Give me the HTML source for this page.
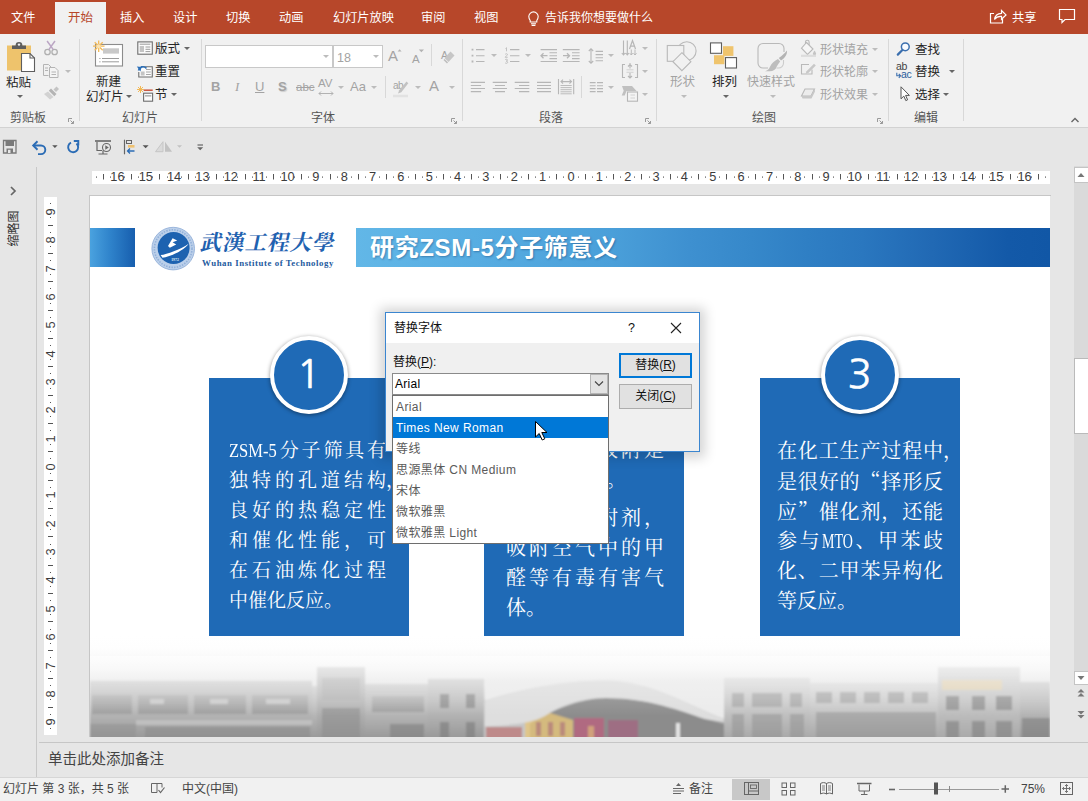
<!DOCTYPE html>
<html lang="zh-CN">
<head>
<meta charset="utf-8">
<title>PowerPoint</title>
<style>
*{box-sizing:border-box;margin:0;padding:0}
html,body{width:1088px;height:801px;overflow:hidden}
body{position:relative;background:#e6e6e6;font-family:"Liberation Sans","Noto Sans CJK SC",sans-serif;font-size:12px;color:#262626}
.abs{position:absolute}
#app{position:absolute;left:0;top:0;width:1088px;height:801px;overflow:hidden}
/* top tab bar */
#tabs{position:absolute;left:0;top:0;width:1088px;height:34px;background:#b7472a}
#tabs .t{position:absolute;top:10px;height:16px;line-height:16px;font-size:12.200px;color:#fff;white-space:nowrap}
#tabs .act{position:absolute;left:55px;top:2px;width:51px;height:32px;background:#f1f1f1}
#tabs .act span{position:absolute;left:0;width:51px;text-align:center;top:8px;line-height:16px;font-size:12.5px;color:#b7472a}
/* ribbon */
#ribbon{position:absolute;left:0;top:34px;width:1088px;height:94px;background:#f1f1f1;border-bottom:1px solid #d2d2d2}
.sep{position:absolute;width:1px;background:#d8d8d8;top:5px;height:82px}
.gl{position:absolute;top:77px;height:15px;line-height:15px;font-size:12px;color:#555;white-space:nowrap}
.rt{position:absolute;font-size:12.5px;line-height:16px;white-space:nowrap;color:#262626}
.dis{color:#a3a3a3}
.car{position:absolute;width:0;height:0;border-left:3px solid transparent;border-right:3px solid transparent;border-top:3px solid #666}
.car.d{border-top-color:#bcbcbc}
/* QAT */
#qat{position:absolute;left:0;top:128px;width:1088px;height:38px;background:#e6e6e6}
/* workspace */
#hruler{position:absolute;left:92px;top:171px;width:958px;height:13px;background:#fff;overflow:hidden}
#hruler>*{margin-left:-1px}
#vruler{position:absolute;left:44px;top:197px;width:13px;height:538px;background:#fff;overflow:hidden}
.rn{position:absolute;top:-1px;width:20px;height:13px;line-height:13px;text-align:center;font-size:12.800px;color:#3c3c3c}
.vn{position:absolute;left:-3.500px;width:20px;height:20px;line-height:20px;text-align:center;font-size:12.800px;color:#3c3c3c;transform:rotate(-90deg)}
#slide{position:absolute;left:90px;top:196px;width:960px;height:541px;background:#fff;overflow:hidden}
#stitle{left:280px;letter-spacing:0.650px;top:36px;height:32px;line-height:32px;font-size:24px;font-weight:bold;color:#fff;white-space:nowrap;font-family:"Liberation Sans","Noto Sans CJK SC",sans-serif;text-shadow:1px 1px 2px rgba(0,40,90,.35)}
#uni{left:111px;top:30px;height:34px;line-height:34px;font-size:21.500px;font-weight:700;color:#1f62b0;white-space:nowrap;font-family:"Liberation Serif","Noto Serif CJK TC","Noto Serif CJK SC",serif;transform:skewX(-12deg);letter-spacing:1px}
#unien{left:112px;top:62px;height:10px;line-height:10px;font-size:8.800px;font-weight:bold;color:#245a9e;white-space:nowrap;font-family:"Liberation Serif",serif;letter-spacing:0.550px}
.card{position:absolute;top:182px;width:200px;height:258px;background:#1f6ab6}
.circ{position:absolute;top:140px;width:78px;height:78px;border-radius:50%;background:#1f6ab6;border:4.500px solid #fff;box-shadow:0 1px 4px rgba(0,0,0,.45)}
.circ span{position:absolute;left:0;top:0;width:69px;height:69px;line-height:69px;text-align:center;font-size:40px;color:#fff;-webkit-text-stroke:0.600px #fff;font-family:"NanumGothic","Liberation Sans",sans-serif}
.ctxt{position:absolute;color:#fff;font-family:"Liberation Serif","Noto Serif CJK SC",serif;line-height:30px;white-space:nowrap}
.ctxt div{height:30px;text-align:justify;text-align-last:justify;text-justify:inter-character}
.ctxt div.last{text-align:left;text-align-last:left}
.c18{font-size:19px}
.q{font-family:"Noto Serif CJK SC",serif}
.ctxt div{position:relative}
.hp{position:absolute;left:100%;top:0}
.lat{display:inline-block;height:20px;vertical-align:baseline;text-align:left;text-align-last:left;white-space:nowrap}
.lat i{display:inline-block;font-style:normal;transform-origin:0 50%}
.c20{font-size:20px}
#thumbl{left:-4px;top:222px;width:36px;height:13px;font-size:12px;line-height:13px;color:#333;white-space:nowrap;text-align:center;transform:rotate(-90deg)}
#notes{left:48px;top:749px;height:20px;line-height:20px;font-size:14.500px;color:#444;white-space:nowrap}
.st{position:absolute;top:3px;height:16px;line-height:16px;font-size:12px;color:#444;white-space:nowrap}
#dlg{position:absolute;left:385px;top:312px;width:315px;height:140px;background:#f0f0f0;border:1px solid #3b86d0;box-shadow:0 1px 11px 5px rgba(0,0,0,.17)}
.dt{position:absolute;height:16px;line-height:16px;font-size:12px;color:#111;white-space:nowrap}
#ddl{position:absolute;left:392px;top:395px;width:217px;height:149px;background:#fff;border:1px solid #6e6e6e;overflow:hidden}
.it{position:absolute;left:0;width:215px;height:21px;line-height:23px;padding-left:3px;font-size:12px;color:#5a5a5a;white-space:nowrap;letter-spacing:.400px}
.it.sel{background:#0078d7;color:#fff}
#leftline{position:absolute;left:36px;top:167px;width:1px;height:610px;background:#c8c8c8}
#status{position:absolute;left:0;top:777px;width:1088px;height:24px;background:#f1f1f1;border-top:1px solid #d6d6d6}
</style>
</head>
<body>
<div id="app">

<!-- ===== TAB BAR ===== -->
<div id="tabs">
  <div class="t" style="left:11px">文件</div>
  <div class="act"><span>开始</span></div>
  <div class="t" style="left:120px">插入</div>
  <div class="t" style="left:173px">设计</div>
  <div class="t" style="left:226px">切换</div>
  <div class="t" style="left:279px">动画</div>
  <div class="t" style="left:333px">幻灯片放映</div>
  <div class="t" style="left:421px">审阅</div>
  <div class="t" style="left:474px">视图</div>
  <div class="t" style="left:545px;font-size:12px">告诉我你想要做什么</div>
  <div class="t" style="left:1012px">共享</div>
</div>

<!-- ===== RIBBON ===== -->
<div id="ribbon">
  <!-- separators (page y = 34 + top) -->
  <div class="sep" style="left:79px"></div>
  <div class="sep" style="left:201px"></div>
  <div class="sep" style="left:462px"></div>
  <div class="sep" style="left:656px"></div>
  <div class="sep" style="left:888px"></div>
  <div class="sep" style="left:963px"></div>
  <div class="sep" style="left:385px;top:42px;height:22px"></div>
  <div class="sep" style="left:431px;top:10px;height:22px"></div>
  <div class="sep" style="left:581px;top:42px;height:22px"></div>

  <!-- clipboard -->
  <div class="rt" style="left:6px;top:41px">粘贴</div>
  <div class="car" style="left:17px;top:61px"></div>
  <div class="car d" style="left:65px;top:36px"></div>
  <div class="gl" style="left:10px">剪贴板</div>

  <!-- slides -->
  <div class="rt" style="left:96px;top:40px">新建</div>
  <div class="rt" style="left:86px;top:55px">幻灯片</div>
  <div class="car" style="left:126px;top:61px"></div>
  <div class="rt" style="left:155px;top:7px">版式</div>
  <div class="car" style="left:184px;top:13px"></div>
  <div class="rt" style="left:155px;top:30px">重置</div>
  <div class="rt" style="left:155px;top:53px">节</div>
  <div class="car" style="left:171px;top:59px"></div>
  <div class="gl" style="left:122px">幻灯片</div>

  <!-- font -->
  <div class="abs" style="left:205px;top:11px;width:128px;height:23px;background:#fff;border:1px solid #c8c8c8"></div>
  <div class="abs" style="left:333px;top:11px;width:50px;height:23px;background:#fff;border:1px solid #c8c8c8"></div>
  <div class="rt dis" style="left:337px;top:16px;font-size:12.5px">18</div>
  <div class="car d" style="left:323px;top:21px"></div>
  <div class="car d" style="left:373px;top:21px"></div>
  <div class="rt dis" style="left:211px;top:45px;font-weight:bold;font-size:13px">B</div>
  <div class="rt dis" style="left:235px;top:45px;font-style:italic;font-size:13px;font-family:'Liberation Serif',serif">I</div>
  <div class="rt dis" style="left:255px;top:45px;font-size:13px;text-decoration:underline">U</div>
  <div class="rt dis" style="left:278px;top:45px;font-size:13px;font-weight:bold;text-shadow:1px 1px 1px #ccc">S</div>
  <div class="rt dis" style="left:296px;top:45px;font-size:11.5px;text-decoration:line-through">abc</div>
  <div class="rt dis" style="left:318px;top:41px;font-size:11.5px">AV</div>
  <div class="car d" style="left:338px;top:52px"></div>
  <div class="rt dis" style="left:350px;top:45px;font-size:13px">Aa</div>
  <div class="car d" style="left:371px;top:52px"></div>
  <div class="rt dis" style="left:388px;top:14px;font-size:15px">A</div>
  <div class="rt dis" style="left:412px;top:17px;font-size:11.5px">A</div>
  <div class="rt dis" style="left:429px;top:44px;font-size:15px">A</div>
  <div class="rt dis" style="left:393px;top:44px;font-size:10px;letter-spacing:-0.500px">ab</div>
  <div class="rt dis" style="left:441px;top:13px;font-size:10.500px">A</div>
  <div class="car d" style="left:415px;top:52px"></div>
  <div class="car d" style="left:449px;top:52px"></div>
  <div class="gl" style="left:311px">字体</div>

  <!-- paragraph -->
  <div class="car d" style="left:491px;top:20px"></div>
  <div class="car d" style="left:525px;top:20px"></div>
  <div class="car d" style="left:608px;top:20px"></div>
  <div class="car d" style="left:642px;top:13px"></div>
  <div class="car d" style="left:642px;top:36px"></div>
  <div class="car d" style="left:642px;top:59px"></div>
  <div class="car d" style="left:608px;top:52px"></div>
  <div class="gl" style="left:539px">段落</div>

  <!-- drawing -->
  <div class="rt dis" style="left:670px;top:40px">形状</div>
  <div class="car d" style="left:681px;top:61px"></div>
  <div class="rt" style="left:712px;top:40px">排列</div>
  <div class="car" style="left:723px;top:61px"></div>
  <div class="rt dis" style="left:747px;top:40px;font-size:12px">快速样式</div>
  <div class="car d" style="left:770px;top:61px"></div>
  <div class="rt dis" style="left:820px;top:8px;font-size:12px">形状填充</div>
  <div class="car d" style="left:872px;top:14px"></div>
  <div class="rt dis" style="left:820px;top:30px;font-size:12px">形状轮廓</div>
  <div class="car d" style="left:872px;top:36px"></div>
  <div class="rt dis" style="left:820px;top:53px;font-size:12px">形状效果</div>
  <div class="car d" style="left:872px;top:59px"></div>
  <div class="gl" style="left:752px">绘图</div>

  <!-- editing -->
  <div class="rt" style="left:915px;top:8px">查找</div>
  <div class="rt" style="left:896px;top:27px;font-size:10.500px;line-height:10px;color:#444;letter-spacing:-0.300px">ab</div>
  <div class="rt" style="left:901px;top:35px;font-size:10.500px;line-height:10px;color:#2b5f9e;letter-spacing:-0.300px">ac</div>
  <div class="rt" style="left:915px;top:30px">替换</div>
  <div class="car" style="left:949px;top:36px"></div>
  <div class="rt" style="left:915px;top:53px">选择</div>
  <div class="car" style="left:943px;top:59px"></div>
  <div class="gl" style="left:914px">编辑</div>
</div>


<svg id="ricons" class="abs" style="left:0;top:0" width="1088" height="128" viewBox="0 0 1088 128" fill="none">
  <!-- lightbulb -->
  <g stroke="#fff" stroke-width="1.1" fill="none">
    <path d="M530.2 20.5 C529.2 19 528.8 18 528.8 16.6 a4.7 4.7 0 0 1 9.4 0 c0 1.4 -0.4 2.4 -1.4 3.9 v1.5 h-6.6 z"/>
    <path d="M531 23.8h5M531.6 25.4h3.8"/>
  </g>
  <!-- share -->
  <g stroke="#fff" stroke-width="1.2" fill="none">
    <path d="M994 13.5h-3.5v9.5h12v-4"/>
    <path d="M994.5 19.5c0.5-4 3-6 7-6.2v-2.8l4.5 4.4-4.5 4.4v-2.9c-3-0.2-5.2 0.6-7 3.1z"/>
  </g>
  <!-- comment -->
  <path d="M1059.5 9.5h15v10h-9.5l-3 3v-3h-2.500z" stroke="#fff" stroke-width="1.2"/>

  <!-- paste -->
  <rect x="7" y="45.5" width="24" height="25" fill="#eec36c"/>
  <path d="M12 49v-3.6h3.6a3.4 3.4 0 0 1 6.800 0h3.600v3.600z" fill="#5e5e5e"/>
  <circle cx="19" cy="44.600" r="1.2" fill="#f1f1f1"/>
  <path d="M21.500 53.500h8.500l4.500 4.500v13.500h-13z" fill="#fff" stroke="#5e5e5e" stroke-width="1.100"/>
  <path d="M30 53.500v4.500h4.500" stroke="#5e5e5e" stroke-width="1.100"/>
  <!-- scissors -->
  <g stroke="#b0b0b0" stroke-width="1.300">
    <circle cx="47.500" cy="52" r="2.700"/>
    <circle cx="54.600" cy="52" r="2.700"/>
    <path d="M48.800 49.600L55 41M53.300 49.600L47.100 41" stroke="#bba6c4" stroke-width="1.500"/>
  </g>
  <!-- copy -->
  <g stroke="#b4b4b4" stroke-width="1">
    <path d="M48.500 75.500h-5v-11h5l2.500 2.500"/>
    <path d="M49.500 67.500h5.500l3 3v7h-8.500z" fill="#f4f4f4"/>
    <path d="M45 68h3M45 70.500h3M51.500 72h4.500M51.500 74.500h4.500"/>
  </g>
  <!-- format painter -->
  <g fill="#c4c4c4">
    <path d="M56.500 86.500l2.500 2.500-3 3-2.500-2.500z"/>
    <path d="M51 88.500l5.500 5.500-2.200 2.200-5.500-5.500z" fill="#b4b4b4"/>
    <path d="M48 91.500l5.500 5.500-3.500 2.500-6-5.500z" fill="#d2d2d2"/>
  </g>
  <!-- dialog launchers -->
  <g stroke="#9a9a9a" stroke-width="1">
    <path id="dl" d="M68.500 122v-3.500h3.500M70.500 120.500l3 3M73.500 121v2.500h-2.500"/>
    <use href="#dl" x="383" />
    <use href="#dl" x="577" />
    <use href="#dl" x="809" />
  </g>
  <!-- new slide -->
  <rect x="95.500" y="44.500" width="27" height="21.500" fill="#fff" stroke="#8c8c8c" stroke-width="1.100"/>
  <rect x="103" y="48.300" width="16" height="5.300" fill="#c9c9c9"/>
  <path d="M102 58.500h17M102 61.800h17M99.300 58.500h1.200M99.300 61.800h1.200" stroke="#9c9c9c" stroke-width="1"/>
  <g stroke="#f2b957" stroke-width="1.300">
    <path d="M98.700 40.500v11.500M93 46.200h11.500M94.700 42.200l8 8M102.700 42.200l-8 8"/>
  </g>
  <circle cx="98.700" cy="46.200" r="2" fill="#fbe3b0"/>
  <!-- layout -->
  <rect x="137.800" y="41.900" width="14.500" height="12.300" fill="#fbfbfb" stroke="#6e6e6e" stroke-width="1.100"/>
  <rect x="139.700" y="46" width="4.300" height="6" fill="#c4c4c4"/>
  <path d="M139.700 44.200h10.600M145.500 47h4.800M145.500 49.300h4.800M145.500 51.600h4.800" stroke="#9c9c9c" stroke-width="1"/>
  <!-- reset -->
  <path d="M141 66.700h11.300v10.300h-13.500v-5" stroke="#6e6e6e" stroke-width="1.100" fill="#fbfbfb"/>
  <rect x="140.800" y="71.500" width="3.800" height="4" fill="#c4c4c4"/>
  <path d="M146 69.500h4.800M146 72h4.800M146 74.500h4.800" stroke="#a8a8a8" stroke-width="1"/>
  <path d="M138.500 70.500c1.200-3.800 5-5 8-2.200" stroke="#2b6fb8" stroke-width="1.700"/>
  <path d="M136.800 66.600l4.700 0.300-1 4.500z" fill="#2b6fb8"/>
  <!-- section -->
  <path d="M143.700 90.200h9" stroke="#c8513a" stroke-width="1.500"/>
  <rect x="143.600" y="93.200" width="9" height="8" fill="#fbfbfb" stroke="#6e6e6e" stroke-width="1.100"/>
  <path d="M145 95.800h6.300" stroke="#b4b4b4" stroke-width="1.600"/>
  <g stroke="#f2b957" stroke-width="1">
    <path d="M140.500 86v7M137 89.500h7M138 87l5 5M143 87l-5 5"/>
  </g>

  <!-- ===== font group icons ===== -->
  <g stroke="#b2b2b2" stroke-width="1" fill="none">
    <!-- grow/shrink carets -->
    <path d="M397.600 51.600l2-2.300 2 2.300z" fill="#b2b2b2" stroke="none"/>
    <path d="M418.800 49.500h5.200l-2.600 2.700z" fill="#b2b2b2" stroke="none"/>
    <!-- clear formatting eraser -->
    <path d="M450.500 51.500l4 4-6 6.500-4-4z" fill="#c6c6c6" stroke="none"/>
    <path d="M444 59.500l3.500 3.500" stroke="#bdbdbd" stroke-width="1.600"/>
    <!-- AV arrow -->
    <path d="M319 93.500h14M321 91.500l-2 2 2 2M331 91.500l2 2-2 2"/>
    <!-- highlighter -->
    <path d="M406.500 81.500l1.800 1.800-7 9-3.300 1.200 1.200-3.300z" fill="#c2c2c2" stroke="none"/>
    <path d="M393 96h15" stroke="#e2e2e2" stroke-width="2.500"/>
  </g>
  <!-- ===== paragraph ===== -->
  <g stroke="#b6b6b6" stroke-width="1.100" fill="none">
    <!-- bullets -->
    <path d="M476 49.600h8.500M476 55.700h8.500M476 61.500h8.500"/>
    <path d="M471.600 49.600h1.800M471.600 55.700h1.800M471.600 61.500h1.800" stroke-width="1.800"/>
    <!-- numbering -->
    <path d="M510 49.600h9.400M510 55.700h9.400M510 61.500h9.400"/>
    <path d="M505.500 48.500l1-0.800v3.600M505.200 54.300c1-1 2.300-0.600 2.300 0.300 0 1-2.300 1.800-2.300 2.700h2.500M505.200 59.600c1-0.700 2.300-0.400 2.300 0.500 0 0.700-0.800 1-1.500 1 0.900 0 1.700 0.400 1.700 1.200 0 1-1.500 1.400-2.600 0.600" stroke-width="0.800"/>
    <!-- decrease indent -->
    <path d="M540.600 49.600h16.400M549.500 52.700h7.500M549.500 55.700h7.500M549.500 58.600h7.500M540.600 61.500h16.400"/>
    <path d="M541 55.700h6.500M543.500 53.200l-2.500 2.500 2.500 2.500" stroke-width="1.300"/>
    <!-- increase indent -->
    <path d="M562.800 49.600h16.800M572 52.700h7.600M572 55.700h7.600M572 58.600h7.600M562.800 61.500h16.800"/>
    <path d="M563 55.700h6.500M567 53.200l2.500 2.500-2.500 2.500" stroke-width="1.300"/>
    <!-- line spacing -->
    <path d="M595.600 51.400h7.400M595.600 54.600h7.400M595.600 57.700h7.400M595.600 60.700h7.400"/>
    <path d="M591 48.800v14.300M588.800 51l2.200-2.300 2.200 2.300M588.800 61l2.200 2.300 2.200-2.300"/>
    <!-- align left -->
    <path d="M470.800 82.400h14.200M470.800 85.500h10.300M470.800 88.500h14.200M470.800 91.600h10.300"/>
    <!-- center -->
    <path d="M492.700 82.400h14.300M495 85.500h10M492.700 88.500h14.300M495 91.600h10"/>
    <!-- right -->
    <path d="M514.700 82.400h14.600M519 85.500h10.300M514.700 88.500h14.600M519 91.600h10.300"/>
    <!-- justify -->
    <path d="M537 82.400h14M537 85.500h14M537 88.500h14M537 91.600h14"/>
    <!-- distribute -->
    <path d="M558.500 79v15.300M573.700 79v15.300"/>
    <path d="M561 81.600h10.500M563 79.600l-2 2 2 2M569.500 79.600l2 2-2 2"/>
    <path d="M560.500 85.500h11.200M560.500 87.600h11.200M560.500 89.700h11.200M560.500 91.800h11.200M560.500 93.800h11.200" stroke-width="0.900"/>
    <!-- columns -->
    <path d="M589.800 82.600h5.800M597 82.600h6M589.800 85.700h5.800M597 85.700h6M589.800 88.600h5.800M597 88.600h6M589.800 91.600h5.800M597 91.600h6"/>
    <!-- text direction -->
    <path d="M623.500 40.500v14.500M627.300 40.500v14.500M621.800 53l1.700 2 1.700-2M625.600 53l1.700 2 1.700-2"/>
    <path d="M629.500 49l3-8.500 3 8.500M630.500 46.200h4" stroke-width="1.200"/>
    <path d="M631.300 49.500v5.500M635 49.500v5.500M629.800 53.200l1.500 1.800 1.500-1.800M633.500 53.200l1.500 1.800 1.500-1.800" stroke-width="0.900"/>
    <!-- align text -->
    <path d="M625 64.500h-2.500v13h2.500M635 64.500h2.500v13h-2.500"/>
    <path d="M630 63v5.500M628 66.500l2-2 2 2M630 78v-5M628 76l2 2 2-2"/>
    <path d="M626.500 69.800h7M626.500 72.300h7" stroke="#cfcfcf" stroke-width="0.900"/>
    <!-- smartart -->
    <path d="M622 86h10l4.500 5h-10l-1.800 4.500h-3l2-4.800z" fill="#c0c0c0" stroke="none"/>
    <rect x="627.500" y="92" width="10" height="9.200" fill="#f4f4f4"/>
    <path d="M630.500 95h4.500M630.500 98h4.500" stroke="#cfcfcf" stroke-width="0.900"/>
  </g>
  <!-- ===== drawing ===== -->
  <g stroke="#b9b9b9" stroke-width="1.100" fill="none">
    <circle cx="686.800" cy="51" r="9.300"/>
    <rect x="667.300" y="45.500" width="16.500" height="15.800" fill="#f1f1f1"/>
    <path d="M681.900 52.700l9 9-9 9-9-9z" fill="#f1f1f1"/>
    <!-- quick style -->
    <path d="M779 43.500h-16a5 5 0 0 0-5 5v14.500a5 5 0 0 0 5 5h5" />
    <path d="M779 43.500a5 5 0 0 1 5 5v3.500"/>
    <path d="M783.500 60v3a5 5 0 0 1-5 5h-2" stroke="#cccccc"/>
    <path d="M787 50.500c0.300 4-2 7.500-6 10l-2.200-2.500c3.500-2.500 6-5 8.200-7.500z" fill="#b4b4b4" stroke="none"/>
    <path d="M778 59l2.200 2.500c-2 2.500-3.200 4.500-4.500 7.200-2 2.600-6.500 2.800-10.700 2.600 3-1 4-2.200 5-4.500 1.500-3.500 4.500-6 8-7.800z" fill="#bdbdbd" stroke="none"/>
  </g>
  <!-- arrange -->
  <rect x="723" y="46.200" width="10.400" height="9.700" fill="#efc46d"/>
  <rect x="714" y="55.200" width="10.400" height="9" fill="#efc46d"/>
  <rect x="710.500" y="42.900" width="11" height="10.400" fill="#fff" stroke="#5e5e5e" stroke-width="1.100"/>
  <rect x="725.500" y="57.600" width="11" height="10.400" fill="#fff" stroke="#5e5e5e" stroke-width="1.100"/>
  <!-- shape fill -->
  <g stroke="#b9b9b9" stroke-width="1.100" fill="none">
    <path d="M806.500 42.500l6.500 6.500-5.500 5.500-6-6.300z" fill="#f6f6f6"/>
    <path d="M805.500 44v-2a1.800 1.800 0 0 1 3.600 0v3"/>
    <path d="M814.500 50.500c1 1.500 1.600 2.500 1.600 3.300a1.600 1.600 0 0 1-3.200 0c0-0.800 0.600-1.800 1.600-3.300z" fill="#c4c4c4" stroke="none"/>
    <path d="M801 55.800h15" stroke="#dcdcdc" stroke-width="2.200"/>
    <!-- shape outline -->
    <path d="M809 64.500h-7.500v9.500h10.500v-4.500"/>
    <path d="M814 63.800l1.800 1.800-7.500 7.500-2.800 1 1-2.800z" fill="#c8c8c8" stroke="none"/>
    <!-- shape effects -->
    <path d="M805 89h9.500l-3.500 7h-9.500z" fill="#ececec"/>
    <path d="M801.500 96l1 2.500h9l3.500-7-0.500-2.500-3.500 7z" fill="#c8c8c8" stroke="none"/>
  </g>
  <!-- find -->
  <g fill="none">
    <circle cx="905.300" cy="46.800" r="3.900" stroke="#3b6fae" stroke-width="1.500" fill="#f8fbff"/>
    <path d="M902.400 50l-4.600 4.600" stroke="#3b6fae" stroke-width="2.200" stroke-linecap="round"/>
    <!-- select cursor -->
    <path d="M901 86.800v12l2.800-2.700 2 4.500 1.800-0.800-2-4.400h3.800z" fill="#fff" stroke="#555" stroke-width="1"/>
    <!-- replace arrow -->
    <path d="M896.800 72.800v3h3.500M898.800 73.800l1.800 2-1.800 2" stroke="#3b6fae" stroke-width="1.100"/>
  </g>
  <!-- collapse ribbon chevron -->
  <path d="M1071.500 122l3.500-3.500 3.500 3.500" stroke="#666" stroke-width="1.400" fill="none"/>
</svg>

<!-- ===== QAT ===== -->
<div id="qat">
<svg class="abs" style="left:0;top:0" width="240" height="38" viewBox="0 128 240 38" fill="none">
  <!-- save -->
  <path d="M3.500 140.500h12.500v12.500h-12.500z" stroke="#7a7a7a" stroke-width="1.300" fill="#e6e6e6"/>
  <rect x="5.500" y="141" width="8.500" height="5" fill="#7a7a7a"/>
  <rect x="6.500" y="148.500" width="6.500" height="4.500" fill="#7a7a7a"/>
  <rect x="8" y="149.800" width="2.500" height="3.200" fill="#e6e6e6"/>
  <!-- undo -->
  <path d="M33.500 145.500h7.500a4.300 4.300 0 0 1 0 8.600h-3" stroke="#2b6cb5" stroke-width="1.900"/>
  <path d="M37.500 141.300l-4.300 4.200 4.300 4.200" stroke="#2b6cb5" stroke-width="1.900"/>
  <path d="M52.200 145.200h5.400l-2.700 2.800z" fill="#555"/>
  <!-- redo/repeat -->
  <path d="M76.500 143.500a5 5 0 1 1-5.500-0.800" stroke="#2b6cb5" stroke-width="1.900"/>
  <path d="M73.800 141h4.500v4.500" stroke="#2b6cb5" stroke-width="1.900"/>
  <!-- slideshow from start -->
  <path d="M95 141h16" stroke="#666" stroke-width="1.600"/>
  <path d="M97 142v8.500h5" stroke="#666" stroke-width="1.200"/>
  <path d="M103 150.500v3M98.500 154h9" stroke="#666" stroke-width="1.200"/>
  <circle cx="106.500" cy="147.500" r="4" stroke="#666" stroke-width="1.100" fill="#e6e6e6"/>
  <path d="M105.300 145.300v4.400l3.500-2.200z" fill="#666"/>
  <!-- icon5 -->
  <path d="M124.500 139.700v14.600" stroke="#666" stroke-width="1.200"/>
  <rect x="126.500" y="140.500" width="5" height="3" stroke="#666" stroke-width="1"/>
  <rect x="128" y="145" width="6.500" height="2.600" fill="#f0c270"/>
  <path d="M134.500 151h-7M130 148.500l-2.500 2.500 2.500 2.500" stroke="#2b6cb5" stroke-width="1.300"/>
  <path d="M142.600 145.200h6l-3 3z" fill="#555"/>
  <!-- icon6 disabled -->
  <path d="M163 141.700v10h-7.500z" stroke="#c6c6c6" stroke-width="1" fill="#dadada"/>
  <path d="M165 141.700v10h7z" fill="#c2c2c2"/>
  <path d="M177 145.200h5l-2.500 2.600z" fill="#c2c2c2"/>
  <!-- customize -->
  <path d="M197.500 145h5.500" stroke="#666" stroke-width="1.200"/>
  <path d="M197.200 147.300h6l-3 3z" fill="#666"/>
</svg>
</div>

<!-- ===== WORKSPACE ===== -->
<div id="leftline"></div>
<svg class="abs" style="left:8px;top:184px" width="12" height="14" viewBox="0 0 12 14" fill="none"><path d="M3 3l4 4-4 4" stroke="#666" stroke-width="1.700"/></svg>
<div class="abs" id="thumbl">缩略图</div>
<!-- scrollbar -->
<div class="abs" style="left:1074px;top:166px;width:14px;height:519px;background:#dadada"></div>
<div class="abs" style="left:1074px;top:167px;width:15px;height:16px;background:#fff;border:1px solid #c4c4c4"></div>
<div class="abs" style="left:1074px;top:358px;width:15px;height:76px;background:#fff;border:1px solid #bababa"></div>
<div class="abs" style="left:1074px;top:671px;width:15px;height:14px;background:#fff;border:1px solid #c4c4c4"></div>
<svg class="abs" style="left:1074px;top:166px" width="14" height="574" viewBox="0 0 14 574" fill="#777">
  <path d="M3.500 11l3.500-4 3.500 4z"/>
  <path d="M3.500 510l3.500 4 3.500-4z"/>
  <path d="M3.500 526.500l3.500-3.500 3.500 3.500zM3.500 530.500l3.500-3.500 3.500 3.500z"/>
  <path d="M3.500 545l3.500 3.500 3.500-3.500zM3.500 549l3.500 3.500 3.500-3.500z"/>
</svg>
<div class="abs" style="left:39px;top:742px;width:1049px;height:1px;background:#c6c6c6"></div>
<div class="abs" id="notes">单击此处添加备注</div>
<div id="hruler"><svg class="abs" style="left:0;top:0" width="960" height="13"><path d="M5.5 5.500v1.200M12.5 3v5.500M19.5 5.500v1.200M33.5 5.500v1.200M40.5 3v5.500M47.5 5.500v1.200M61.5 5.500v1.200M68.5 3v5.500M76.5 5.500v1.200M90.5 5.500v1.200M97.5 3v5.500M104.5 5.500v1.200M118.5 5.500v1.200M125.5 3v5.500M132.5 5.500v1.200M146.5 5.500v1.200M154.5 3v5.500M161.5 5.500v1.200M175.5 5.500v1.200M182.5 3v5.500M189.5 5.500v1.200M203.5 5.500v1.200M210.5 3v5.500M217.5 5.500v1.200M231.5 5.500v1.200M239.5 3v5.500M246.5 5.500v1.200M260.5 5.500v1.200M267.5 3v5.500M274.5 5.500v1.200M288.5 5.500v1.200M295.5 3v5.500M302.5 5.500v1.200M317.5 5.500v1.200M324.5 3v5.500M331.5 5.500v1.200M345.5 5.500v1.200M352.5 3v5.500M359.5 5.500v1.200M373.5 5.500v1.200M380.5 3v5.500M387.5 5.500v1.200M402.5 5.500v1.200M409.5 3v5.500M416.5 5.500v1.200M430.5 5.500v1.200M437.5 3v5.500M444.5 5.500v1.200M458.5 5.500v1.200M465.5 3v5.500M472.5 5.500v1.200M487.5 5.500v1.200M494.5 3v5.500M501.5 5.500v1.200M515.5 5.500v1.200M522.5 3v5.500M529.5 5.500v1.200M543.5 5.500v1.200M550.5 3v5.500M558.5 5.500v1.200M572.5 5.500v1.200M579.5 3v5.500M586.5 5.500v1.200M600.5 5.500v1.200M607.5 3v5.500M614.5 5.500v1.200M628.5 5.500v1.200M635.5 3v5.500M643.5 5.500v1.200M657.5 5.500v1.200M664.5 3v5.500M671.5 5.500v1.200M685.5 5.500v1.200M692.5 3v5.500M699.5 5.500v1.200M713.5 5.500v1.200M721.5 3v5.500M728.5 5.500v1.200M742.5 5.500v1.200M749.5 3v5.500M756.5 5.500v1.200M770.5 5.500v1.200M777.5 3v5.500M784.5 5.500v1.200M798.5 5.500v1.200M806.5 3v5.500M813.5 5.500v1.200M827.5 5.500v1.200M834.5 3v5.500M841.5 5.500v1.200M855.5 5.500v1.200M862.5 3v5.500M869.5 5.500v1.200M884.5 5.500v1.200M891.5 3v5.500M898.5 5.500v1.200M912.5 5.500v1.200M919.5 3v5.500M926.5 5.500v1.200M940.5 5.500v1.200M947.5 3v5.500M954.5 5.500v1.200" stroke="#555" stroke-width="1" fill="none"/></svg><span class="rn" style="left:16.4px">16</span><span class="rn" style="left:44.8px">15</span><span class="rn" style="left:73.1px">14</span><span class="rn" style="left:101.4px">13</span><span class="rn" style="left:129.8px">12</span><span class="rn" style="left:158.1px">11</span><span class="rn" style="left:186.5px">10</span><span class="rn" style="left:214.9px">9</span><span class="rn" style="left:243.2px">8</span><span class="rn" style="left:271.5px">7</span><span class="rn" style="left:299.9px">6</span><span class="rn" style="left:328.2px">5</span><span class="rn" style="left:356.6px">4</span><span class="rn" style="left:384.9px">3</span><span class="rn" style="left:413.3px">2</span><span class="rn" style="left:441.6px">1</span><span class="rn" style="left:470.0px">0</span><span class="rn" style="left:498.4px">1</span><span class="rn" style="left:526.7px">2</span><span class="rn" style="left:555.0px">3</span><span class="rn" style="left:583.4px">4</span><span class="rn" style="left:611.8px">5</span><span class="rn" style="left:640.1px">6</span><span class="rn" style="left:668.5px">7</span><span class="rn" style="left:696.8px">8</span><span class="rn" style="left:725.1px">9</span><span class="rn" style="left:753.5px">10</span><span class="rn" style="left:781.9px">11</span><span class="rn" style="left:810.2px">12</span><span class="rn" style="left:838.5px">13</span><span class="rn" style="left:866.9px">14</span><span class="rn" style="left:895.2px">15</span><span class="rn" style="left:923.6px">16</span></div>
<div id="vruler"><svg class="abs" style="left:0;top:0" width="13" height="540"><path d="M6 6.5h1M6 20.5h1M4 28.5h5M6 35.5h1M6 49.5h1M4 56.5h5M6 63.5h1M6 77.5h1M4 84.5h5M6 91.5h1M6 106.5h1M4 113.5h5M6 120.5h1M6 134.5h1M4 141.5h5M6 148.5h1M6 162.5h1M4 169.5h5M6 176.5h1M6 191.5h1M4 198.5h5M6 205.5h1M6 219.5h1M4 226.5h5M6 233.5h1M6 247.5h1M4 254.5h5M6 261.5h1M6 276.5h1M4 283.5h5M6 290.5h1M6 304.5h1M4 311.5h5M6 318.5h1M6 332.5h1M4 339.5h5M6 347.5h1M6 361.5h1M4 368.5h5M6 375.5h1M6 389.5h1M4 396.5h5M6 403.5h1M6 417.5h1M4 424.5h5M6 432.5h1M6 446.5h1M4 453.5h5M6 460.5h1M6 474.5h1M4 481.5h5M6 488.5h1M6 502.5h1M4 510.5h5M6 517.5h1M6 531.5h1" stroke="#555" stroke-width="1" fill="none"/></svg><span class="vn" style="top:4.8px">9</span><span class="vn" style="top:33.2px">8</span><span class="vn" style="top:61.5px">7</span><span class="vn" style="top:89.9px">6</span><span class="vn" style="top:118.2px">5</span><span class="vn" style="top:146.6px">4</span><span class="vn" style="top:174.9px">3</span><span class="vn" style="top:203.3px">2</span><span class="vn" style="top:231.6px">1</span><span class="vn" style="top:260.0px">0</span><span class="vn" style="top:288.4px">1</span><span class="vn" style="top:316.7px">2</span><span class="vn" style="top:345.0px">3</span><span class="vn" style="top:373.4px">4</span><span class="vn" style="top:401.8px">5</span><span class="vn" style="top:430.1px">6</span><span class="vn" style="top:458.5px">7</span><span class="vn" style="top:486.8px">8</span><span class="vn" style="top:515.1px">9</span></div>
<div class="abs" style="left:89px;top:195px;width:962px;height:1px;background:#c6c6c6"></div>
<div class="abs" style="left:89px;top:195px;width:1px;height:542px;background:#c6c6c6"></div>
<div id="slide">
  <!-- header band -->
  <div class="abs" style="left:0;top:32px;width:45px;height:39px;background:linear-gradient(90deg,#4aa2df 0%,#2f83cb 45%,#175eae 100%)"></div>
  <div class="abs" style="left:266px;top:32px;width:694px;height:39px;background:linear-gradient(90deg,#62b7e7 0%,#57ade2 17%,#4a9fd9 37%,#3e90d0 48%,#3688ca 57%,#2f7fc4 65%,#2a77bf 73%,#2169b4 83%,#1359a8 94%,#1157a6 100%)"></div>
  <div class="abs" id="stitle">研究ZSM-5分子筛意义</div>
  <!-- logo -->
  <svg class="abs" style="left:58px;top:28px" width="50" height="50" viewBox="0 0 50 50">
    <circle cx="25.200" cy="24.600" r="21.300" fill="#bcd0ea" stroke="#8aaad6" stroke-width="0.800"/>
    <circle cx="25.200" cy="24.600" r="18.800" fill="none" stroke="#7fa3d3" stroke-width="1.600" stroke-dasharray="1.400 1.300" opacity="0.700"/>
    <circle cx="25.600" cy="24" r="16" fill="#1d62b0"/>
    <path d="M12.600 31.100C19.100 30.200 31.900 25.600 40.700 19.700 36.500 25.600 24.600 32 14.500 33.800z" fill="#fff"/>
    <path d="M20 21.900l4.600-7.700 4.600 2.200-4.600 1.800 3.600 2.200-6.400 3.300z" fill="#fff"/>
    <text x="27" y="36.800" font-size="3.800" font-weight="bold" fill="#dfe9f6" text-anchor="middle" font-family="Liberation Serif,serif">1972</text>
  </svg>
  <div class="abs" id="uni">武漢工程大學</div>
  <div class="abs" id="unien">Wuhan Institute of Technology</div>

  <!-- building photo -->
  <svg class="abs" style="left:0;top:440px" width="960" height="101" viewBox="0 0 960 101">
    <defs>
      <linearGradient id="sky" x1="0" y1="0" x2="0" y2="1"><stop offset="0" stop-color="#fff"/><stop offset="0.120" stop-color="#fefefe"/><stop offset="0.300" stop-color="#f5f5f5"/><stop offset="0.450" stop-color="#ebebeb"/><stop offset="1" stop-color="#d8d8d8"/></linearGradient>
      <linearGradient id="bld" x1="0" y1="0" x2="0" y2="1"><stop offset="0" stop-color="#d6d6d6"/><stop offset="0.400" stop-color="#c0c0c0"/><stop offset="1" stop-color="#989898"/></linearGradient>
      <linearGradient id="bld2" x1="0" y1="0" x2="0" y2="1"><stop offset="0" stop-color="#e0e0e0"/><stop offset="0.400" stop-color="#cccccc"/><stop offset="1" stop-color="#a8a8a8"/></linearGradient>
      <linearGradient id="win" x1="0" y1="0" x2="0" y2="1"><stop offset="0" stop-color="#b4b4b4"/><stop offset="1" stop-color="#8c8c8c"/></linearGradient>
      <linearGradient id="fade" x1="0" y1="0" x2="0" y2="1"><stop offset="0" stop-color="#fff" stop-opacity="0.600"/><stop offset="0.400" stop-color="#fff" stop-opacity="0.250"/><stop offset="1" stop-color="#fff" stop-opacity="0"/></linearGradient>
      <filter id="bl" x="-5%" y="-5%" width="110%" height="110%"><feGaussianBlur stdDeviation="1"/></filter>
    </defs>
    <rect x="0" y="0" width="960" height="101" fill="url(#sky)"/>
    <g filter="url(#bl)">
      <rect x="0" y="50" width="960" height="53" fill="url(#bld)"/>
      <rect x="0" y="45" width="222" height="58" fill="url(#bld)"/>
      <rect x="227" y="31" width="48" height="72" fill="url(#bld)"/>
      <rect x="275" y="48" width="63" height="55" fill="url(#bld)"/>
      <rect x="338" y="43" width="56" height="60" fill="url(#bld)"/>
      <!-- left windows -->
      <g fill="url(#win)" opacity="0.550">
        <rect x="2" y="59" width="40" height="19"/><rect x="48" y="59" width="50" height="19"/><rect x="104" y="59" width="52" height="19"/><rect x="162" y="59" width="56" height="19"/>
      </g>
      <g fill="#e4e4e4" opacity="0.550">
        <rect x="60" y="63" width="14" height="5"/><rect x="120" y="63" width="18" height="5"/><rect x="176" y="63" width="24" height="5"/>
      </g>
      <rect x="46" y="84" width="176" height="5" fill="#c8c8c8" opacity="0.700"/>
      <rect x="55" y="91" width="165" height="12" fill="#8a8a8a" opacity="0.550"/>
      <rect x="0" y="88" width="46" height="15" fill="#909090" opacity="0.500"/>
      <rect x="232" y="42" width="38" height="22" fill="#b0b0b0" opacity="0.400"/>
      <rect x="232" y="72" width="38" height="31" fill="#8c8c8c" opacity="0.550"/>
      <rect x="282" y="60" width="52" height="16" fill="url(#win)" opacity="0.550"/>
      <rect x="300" y="88" width="34" height="15" fill="#808080" opacity="0.600"/>
      <rect x="350" y="58" width="9" height="14" fill="#848484" opacity="0.650"/>
      <rect x="376" y="58" width="9" height="14" fill="#848484" opacity="0.650"/>
      <rect x="350" y="86" width="9" height="17" fill="#7e7e7e" opacity="0.650"/>
      <rect x="376" y="86" width="9" height="17" fill="#7e7e7e" opacity="0.650"/>
      <!-- arc roof -->
      <path d="M394 47H634V83C600 70 560 44.400 516 44.400 480 44.400 440 50 394.600 64.700z" fill="#ebebeb"/>
      <rect x="394" y="64" width="48" height="39" fill="#c6c6c6"/>
      <path d="M440 103V88C460 75 490 62 516 62 560 62 590 75 615 83L634 88V103z" fill="#8c8c8c"/>
      <rect x="396" y="91" width="36" height="12" fill="#b85a5a" opacity="0.550"/>
      <path d="M435 103V84l22-8 26 8v19z" fill="#e6c67a" opacity="0.800"/>
      <rect x="446" y="86" width="5" height="14" fill="#a05a78" opacity="0.500"/><rect x="458" y="86" width="5" height="14" fill="#a05a78" opacity="0.500"/><rect x="470" y="86" width="5" height="14" fill="#a05a78" opacity="0.500"/>
      <rect x="484" y="82" width="30" height="21" fill="#c8547a" opacity="0.600"/>
      <rect x="518" y="84" width="30" height="19" fill="#b0507a" opacity="0.500"/>
      <rect x="498" y="90" width="6" height="13" fill="#e6c67a" opacity="0.600"/>
      <rect x="586" y="87" width="4" height="16" fill="#f4f4f4" opacity="0.850"/>
      <path d="M394.600 64.700C440 50 480 44.400 516 44.400 560 44.400 600 70 633.500 83L634 86 615 83C590 75 560 62 516 62 490 62 470 70 455 80 440 88 420 89 394.600 90.400z" fill="#dedede"/>
      <!-- right buildings -->
      <rect x="634" y="42" width="86" height="61" fill="url(#bld2)"/>
      <rect x="720" y="47" width="128" height="56" fill="url(#bld2)"/>
      <rect x="848" y="31" width="82" height="72" fill="url(#bld2)"/>
      <rect x="930" y="46" width="30" height="57" fill="url(#bld)"/>
      <g fill="#8e8e8e" opacity="0.450">
        <rect x="726" y="56" width="16" height="11"/><rect x="750" y="56" width="16" height="11"/><rect x="774" y="56" width="16" height="11"/><rect x="798" y="56" width="16" height="11"/><rect x="822" y="56" width="16" height="11"/>
        <rect x="726" y="76" width="120" height="27"/>
        <rect x="642" y="57" width="12" height="14"/><rect x="662" y="57" width="30" height="14"/><rect x="700" y="57" width="12" height="14"/>
        <rect x="642" y="78" width="12" height="25"/><rect x="662" y="78" width="30" height="25"/><rect x="700" y="78" width="14" height="25"/>
      </g>
      <g fill="#808080" opacity="0.600">
        <rect x="856" y="60" width="13" height="14"/><rect x="882" y="60" width="13" height="14"/><rect x="906" y="60" width="16" height="14"/>
        <rect x="856" y="85" width="13" height="18"/><rect x="882" y="85" width="13" height="18"/><rect x="906" y="85" width="16" height="18"/>
        <rect x="932" y="82" width="28" height="21"/>
      </g>
      <rect x="852" y="44" width="60" height="10" fill="#f2d9a8" opacity="0.500"/>
    </g>
    <rect x="0" y="20" width="960" height="60" fill="url(#fade)"/>
  </svg>

  <!-- cards -->
  <div class="card" style="left:119px"></div>
  <div class="card" style="left:394px"></div>
  <div class="card" style="left:670px"></div>
  <div class="circ" style="left:180px"><span>1</span></div>
  <div class="circ" style="left:455px"><span>2</span></div>
  <div class="circ" style="left:731px"><span>3</span></div>

  <div class="ctxt c18" style="left:139px;width:157px;top:240px">
    <div><span class="lat" style="width:48px"><i style="transform:scaleX(.87)">ZSM-5</i></span>分子筛具有</div><div>独特的孔道结构<span class="hp">，</span></div><div>良好的热稳定性</div><div>和催化性能，可</div><div>在石油炼化过程</div><div class="last">中催化反应。</div>
  </div>
  <div class="ctxt c20" style="left:416px;width:158px;top:239px">
    <div>分子筛的吸附是</div><div class="last">物理性吸附。</div><div style="margin-top:8px">可用作吸附剂，</div><div>吸附空气中的甲</div><div>醛等有毒有害气</div><div class="last">体。</div>
  </div>
  <div class="ctxt c20" style="left:687px;width:166px;top:240px">
    <div>在化工生产过程中<span class="hp">，</span></div><div>是很好的<span class="q">“</span>择形反</div><div>应<span class="q">”</span>催化剂，还能</div><div>参与<span class="lat" style="width:31px"><i style="transform:scaleX(.7)">MTO</i></span>、甲苯歧</div><div>化、二甲苯异构化</div><div class="last">等反应。</div>
  </div>
</div>


<!-- ===== DIALOG ===== -->
<div id="dlg">
  <div class="abs" style="left:0;top:0;width:313px;height:30px;background:#fff"></div>
  <div class="dt" style="left:8px;top:7px">替换字体</div>
  <div class="dt" style="left:242px;top:7px;font-size:12.500px">?</div>
  <svg class="abs" style="left:283px;top:8px" width="14" height="14" viewBox="0 0 14 14"><path d="M2 2l10 10M12 2l-10 10" stroke="#222" stroke-width="1.100" fill="none"/></svg>
  <div class="dt" style="left:7px;top:41px">替换(<u>P</u>):</div>
  <div class="abs" style="left:6px;top:60px;width:217px;height:22px;background:#fff;border:1px solid #8a8a8a"></div>
  <div class="dt" style="left:9px;top:63px;color:#000;letter-spacing:.300px">Arial</div>
  <div class="abs" style="left:204px;top:61px;width:18px;height:20px;background:#e3e3e3;border:1px solid #b5b5b5"></div>
  <svg class="abs" style="left:207px;top:67px" width="12" height="8" viewBox="0 0 12 8"><path d="M2 1.500l4 4 4-4" stroke="#444" stroke-width="1.100" fill="none"/></svg>
  <div class="abs" style="left:233px;top:40px;width:73px;height:25px;background:#e1e1e1;border:2px solid #0078d7"></div>
  <div class="dt" style="left:233px;top:44px;width:73px;text-align:center">替换(<u>R</u>)</div>
  <div class="abs" style="left:233px;top:71px;width:73px;height:25px;background:#e1e1e1;border:1px solid #adadad"></div>
  <div class="dt" style="left:233px;top:75px;width:73px;text-align:center">关闭(<u>C</u>)</div>
</div>
<div id="ddl">
  <div class="it" style="top:0">Arial</div>
  <div class="it sel" style="top:21px">Times New Roman</div>
  <div class="it" style="top:42px">等线</div>
  <div class="it" style="top:63px">思源黑体 CN Medium</div>
  <div class="it" style="top:84px">宋体</div>
  <div class="it" style="top:105px">微软雅黑</div>
  <div class="it" style="top:126px">微软雅黑 Light</div>
</div>
<svg class="abs" style="left:534px;top:420px" width="16" height="22" viewBox="0 0 16 22"><path d="M1.500 1.500v15.500l3.700-3.500 3 6.500 2.600-1.200-3-6.300h5.200z" fill="#fff" stroke="#000" stroke-width="1"/></svg>

<!-- ===== STATUS ===== -->
<div id="status">
  <div class="st" style="left:3px">幻灯片 第 3 张，共 5 张</div>
  <div class="st" style="left:182px">中文(中国)</div>
  <div class="st" style="left:689px">备注</div>
  <div class="abs" style="left:732px;top:1px;width:38px;height:21px;background:#c8c8c8"></div>
  <div class="st" style="left:1021px">75%</div>
  <svg class="abs" style="left:0;top:0" width="1088" height="24" viewBox="0 778 1088 24" fill="none" stroke="#666" stroke-width="1">
    <!-- spell icon -->
    <path d="M151.500 783.500h5.500v9h-5.500zM157 783.500h5v4" />
    <path d="M158.500 790l2 2.500 4-5" stroke-width="1.200"/>
    <!-- notes icon -->
    <path d="M673 788.500h11M673 791h11M673 793.500h8" />
    <path d="M676 786l2.500-3 2.500 3z" fill="#666" stroke="none"/>
    <!-- normal view -->
    <rect x="744.500" y="782.500" width="14" height="12" />
    <path d="M748.500 782.500v12M748.500 791h10" />
    <rect x="750.500" y="785" width="6" height="3.500" stroke-width="0.900"/>
    <!-- sorter -->
    <rect x="782" y="783" width="4.500" height="4.500"/><rect x="790.500" y="783" width="4.500" height="4.500"/>
    <rect x="782" y="790.500" width="4.500" height="4.500"/><rect x="790.500" y="790.500" width="4.500" height="4.500"/>
    <!-- reading -->
    <path d="M826.500 783.500c-2-1.200-4-1.200-6 0v10.500c2-1.200 4-1.200 6 0zM826.500 783.500c2-1.200 4-1.200 6 0v10.500c-2-1.200-4-1.200-6 0z"/>
    <path d="M822 786h3M822 788h3M822 790h3M828 786h3M828 788h3M828 790h3" stroke-width="0.800"/>
    <!-- slideshow -->
    <path d="M857 783.500h14.500" stroke-width="1.500"/>
    <path d="M859 784.500v6.500h10.500v-6.500M864.300 791v3M861 794.500h6.500"/>
    <!-- zoom -->
    <path d="M889 789.500h6" stroke-width="1.600"/>
    <path d="M899 789.500h100" stroke="#9a9a9a"/>
    <path d="M949.500 786v6" stroke="#8a8a8a"/>
    <rect x="934" y="782.500" width="4" height="12" fill="#555" stroke="none"/>
    <path d="M1001.500 789h7.500M1005.300 785.300v7.500" stroke-width="1.500"/>
    <!-- fit -->
    <rect x="1060.500" y="782.500" width="12" height="12"/>
    <path d="M1066.500 784.500v8M1062.500 788.500h8M1065 786l1.500-1.500 1.500 1.500M1065 791l1.500 1.500 1.500-1.500M1064 787l-1.500 1.500 1.500 1.500M1069 787l1.500 1.500-1.500 1.500" stroke-width="0.900"/>
  </svg>
</div>

</div>
</body>
</html>
